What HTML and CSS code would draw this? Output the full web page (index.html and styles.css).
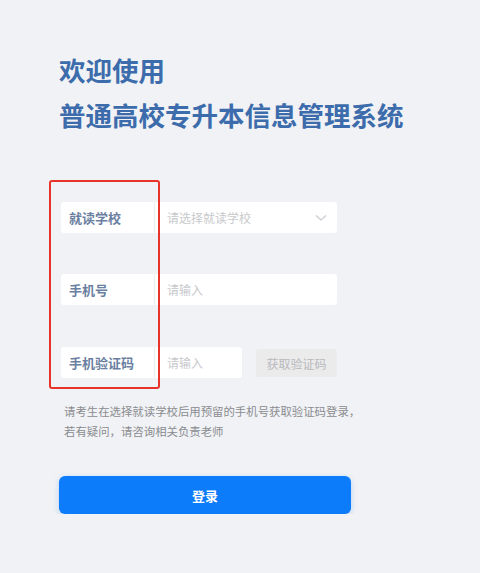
FILE: index.html
```html
<!DOCTYPE html>
<html lang="zh-CN">
<head>
    <meta charset="UTF-8">
    <meta name="viewport" content="width=device-width, initial-scale=1.0">
    <title>普通高校专升本信息管理系统</title>
    <link rel="stylesheet" href="styles.css">
</head>
<body>
    <div class="page">
        <div class="title">
            <div class="title-line">欢迎使用</div>
            <div class="title-line">普通高校专升本信息管理系统</div>
        </div>

        <div class="form">
            <div class="form-row">
                <div class="field-label">就读学校</div>
                <div class="field-input select">
                    <span class="placeholder">请选择就读学校</span>
                    <svg class="arrow" width="12" height="8" viewBox="0 0 12 8">
                        <path d="M1 1.5 L6 6 L11 1.5" fill="none" stroke="#c9ccd2" stroke-width="1.3"/>
                    </svg>
                </div>
            </div>
            <div class="form-row">
                <div class="field-label">手机号</div>
                <div class="field-input">
                    <span class="placeholder">请输入</span>
                </div>
            </div>
            <div class="form-row">
                <div class="field-label">手机验证码</div>
                <div class="field-input short">
                    <span class="placeholder">请输入</span>
                </div>
                <button class="code-btn" disabled>获取验证码</button>
            </div>
            <div class="mark-box"></div>
        </div>

        <p class="hint">请考生在选择就读学校后用预留的手机号获取验证码登录，<br>若有疑问，请咨询相关负责老师</p>

        <button class="login-btn">登录</button>
    </div>
</body>
</html>
```

FILE: styles.css
```css
body {
    margin: 0;
    padding: 0;
    background: #f1f2f5;
    font-family: "Noto Sans CJK SC", "Noto Sans", sans-serif;
    color: #333;
}

.page {
    padding: 47px 0 0 59px;
}

.title {
    color: #3c6cab;
    font-size: 26.5px;
    font-weight: 700;
}

.title-line {
    line-height: 45px;
}

.form {
    position: relative;
    margin-top: 65px;
    width: 276px;
    padding-left: 2px;
}

.form-row {
    display: flex;
    height: 31px;
    margin-bottom: 41px;
}

.form-row:nth-child(2) {
    margin-bottom: 42px;
}

.form-row:nth-child(3) {
    margin-bottom: 0;
}

.field-label {
    width: 94px;
    box-sizing: border-box;
    background: #fff;
    border-radius: 3px 0 0 3px;
    border-right: 1px solid #eceef1;
    padding-left: 8px;
    font-size: 13px;
    font-weight: 700;
    line-height: 31px;
    color: #6a7fa1;
}

.field-input {
    flex: 1;
    background: #fff;
    border-radius: 0 3px 3px 0;
    display: flex;
    align-items: center;
    justify-content: space-between;
    padding: 0 10px 0 12px;
}

.field-input.short {
    flex: none;
    width: 65px;
}

.placeholder {
    font-size: 12px;
    color: #c8c9cc;
}

.code-btn {
    margin-left: 14px;
    width: 81px;
    height: 28px;
    margin-top: 2px;
    border: none;
    border-radius: 3px;
    background: #ebebec;
    color: #b8b9bc;
    font-family: inherit;
    font-size: 12px;
    padding: 0;
}

.mark-box {
    position: absolute;
    left: -10px;
    top: -22px;
    width: 107px;
    height: 205px;
    border: 2px solid #e8332b;
    border-radius: 3px;
}

.hint {
    margin: 23px 0 0 5px;
    font-size: 11.4px;
    line-height: 20px;
    color: #8a8c90;
}

.login-btn {
    display: block;
    margin-top: 35px;
    width: 292px;
    height: 38px;
    border: none;
    border-radius: 6px;
    background: #0c7cfb;
    color: #fff;
    font-family: inherit;
    font-size: 13px;
    font-weight: 700;
    box-shadow: 0 2px 6px rgba(12, 124, 251, 0.25);
}
```
